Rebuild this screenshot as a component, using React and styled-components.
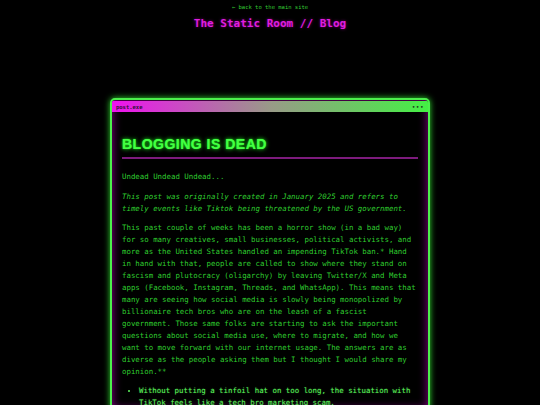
import styled, { createGlobalStyle } from "styled-components";

const GlobalStyle = createGlobalStyle`
  html, body {
    margin: 0;
    padding: 0;
    background: #000;
  }
  body {
    font-family: "DejaVu Sans Mono", "Liberation Mono", monospace;
    color: #2fcc2f;
  }
`;

const paragraphs = [
  "This past couple of weeks has been a horror show (in a bad way) for so many creatives, small businesses, political activists, and more as the United States handled an impending TikTok ban.* Hand in hand with that, people are called to show where they stand on fascism and plutocracy (oligarchy) by leaving Twitter/X and Meta apps (Facebook, Instagram, Threads, and WhatsApp). This means that many are seeing how social media is slowly being monopolized by billionaire tech bros who are on the leash of a fascist government. Those same folks are starting to ask the important questions about social media use, where to migrate, and how we want to move forward with our internet usage. The answers are as diverse as the people asking them but I thought I would share my opinion.**",
];

const points = [
  "Without putting a tinfoil hat on too long, the situation with TikTok feels like a tech bro marketing scam.",
];

const App = () => {
  return (
    <>
      <GlobalStyle />
      <Page>
        <Header>
          <BackLink href="#">← back to the main site</BackLink>
          <SiteTitle>The Static Room // Blog</SiteTitle>
        </Header>
        <Window>
          <TitleBar>
            <WindowName>post.exe</WindowName>
            <Dots>•••</Dots>
          </TitleBar>
          <Body>
            <Heading>BLOGGING IS DEAD</Heading>
            <Text $gap={8.5}>Undead Undead Undead...</Text>
            <Text $italic>
              This post was originally created in January 2025 and refers to
              timely events like Tiktok being threatened by the US government.
            </Text>
            {paragraphs.map((p, i) => (
              <Text key={i} $gap={7}>{p}</Text>
            ))}
            <List>
              {points.map((p, i) => (
                <Item key={i}>{p}</Item>
              ))}
            </List>
          </Body>
        </Window>
      </Page>
    </>
  );
};

const Page = styled.div`
  width: 100%;
  height: 405px;
  overflow: hidden;
`;

// header
const Header = styled.header`
  display: flex;
  flex-direction: column;
  align-items: center;
  padding-top: 2.5px;
`;

const BackLink = styled.a`
  font-size: 5.5px;
  line-height: 9px;
  color: #33cc33;
  text-decoration: none;
`;

const SiteTitle = styled.h1`
  margin: 5px 0 0;
  font-size: 11px;
  line-height: 14px;
  font-weight: bold;
  color: #e01ee0;
  text-shadow: 0 0 3px rgba(255, 0, 255, 0.5);
`;

// window
const Window = styled.div`
  width: 320px;
  box-sizing: border-box;
  margin: 67.5px auto 0;
  border: 2px solid #4cf04c;
  border-radius: 5px;
  background: #000;
  box-shadow: 0 0 6px #2fdc2f, inset 0 0 10px rgba(200, 0, 200, 0.75);
  overflow: hidden;
`;

const TitleBar = styled.div`
  display: flex;
  align-items: center;
  justify-content: space-between;
  height: 11px;
  margin-top: 1px;
  padding: 0 4px;
  background: linear-gradient(90deg, #f010f0 0%, #999a88 50%, #44f044 100%);
`;

const WindowName = styled.span`
  font-size: 5.5px;
  font-weight: bold;
  color: #2a1030;
`;

const Dots = styled.span`
  font-size: 6px;
  letter-spacing: 0.5px;
  color: #1a301a;
`;

const Body = styled.div`
  padding: 24px 10px 0;
`;

const Heading = styled.h2`
  margin: 0 0 11.5px;
  padding-bottom: 4px;
  border-bottom: 2px solid #7d1b7d;
  font-family: "Liberation Sans", Arial, sans-serif;
  font-size: 14px;
  line-height: 17px;
  font-weight: bold;
  letter-spacing: 0.5px;
  color: #44ff44;
  text-shadow: 0 0 4px #22ff22, 0 0 1px #22ff22;
`;

const Text = styled.p`
  margin: 0 0 ${(p) => p.$gap ?? 7.5}px;
  font-size: 7.4px;
  line-height: 11.95px;
  color: #2fcc2f;
  font-style: ${(p) => (p.$italic ? "italic" : "normal")};
`;

const List = styled.ul`
  margin: 0;
  padding-left: 17px;
  font-size: 7.4px;
  line-height: 11.95px;
  color: #5cf55c;
`;

const Item = styled.li`
  text-shadow: 0 0 1.5px rgba(80, 255, 80, 0.4);
`;

export default App;
